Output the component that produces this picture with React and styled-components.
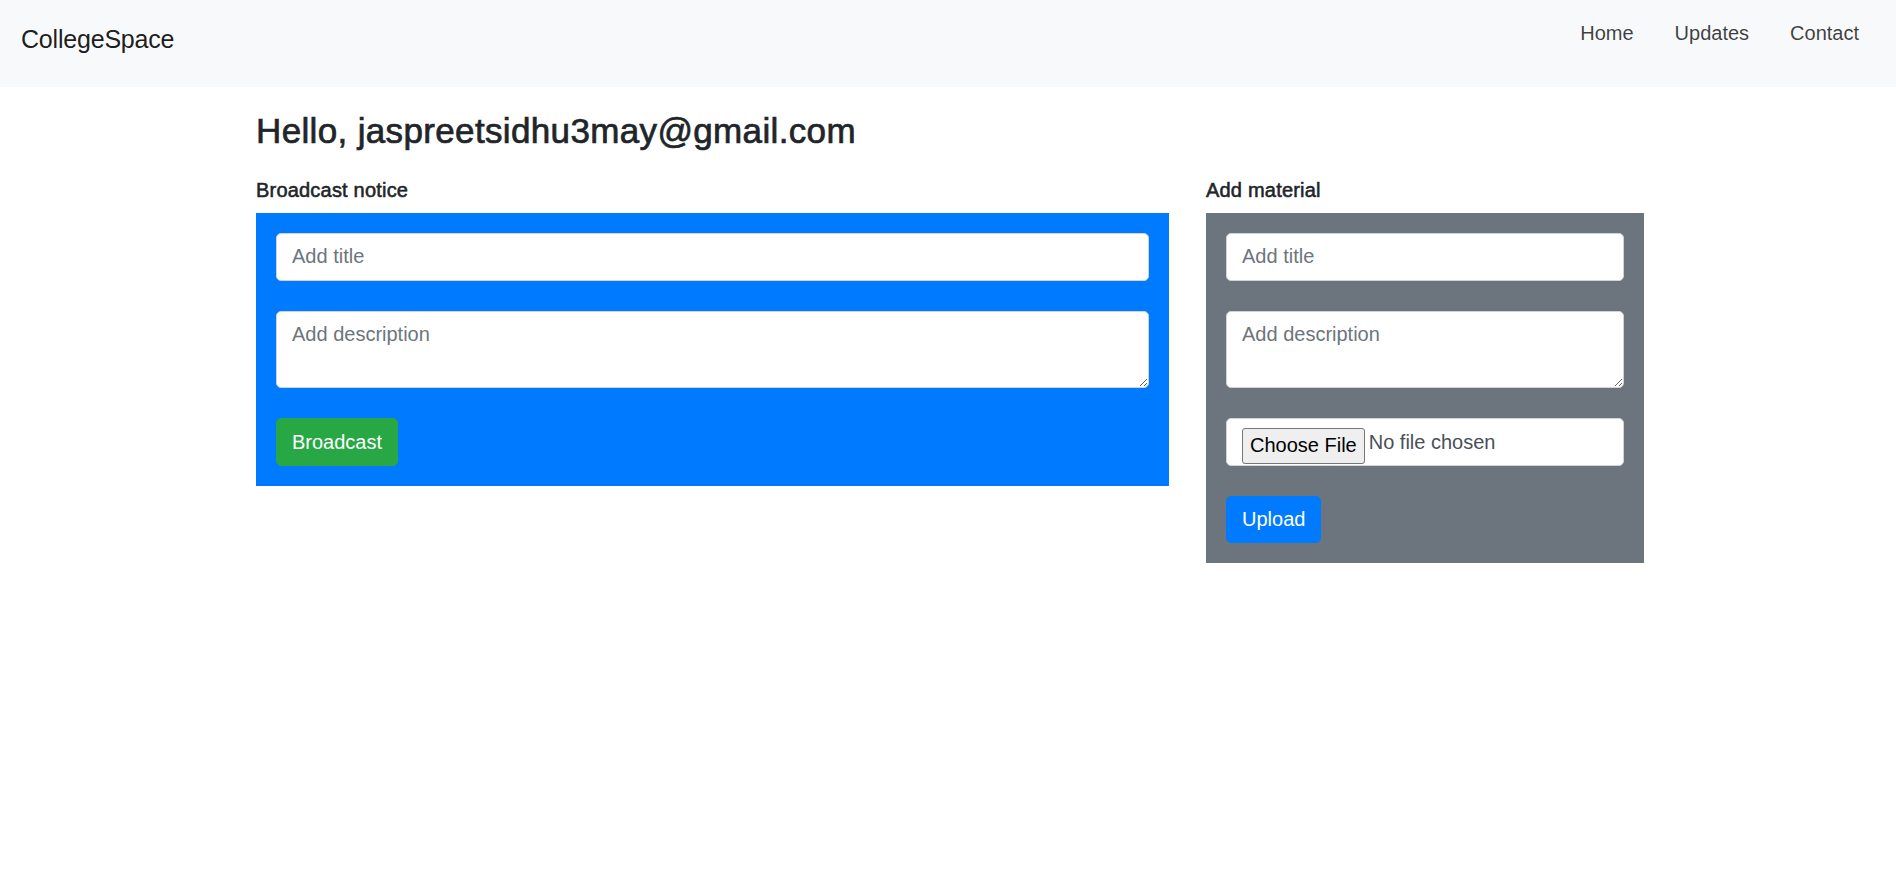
import React from "react";
import styled, { createGlobalStyle } from "styled-components";

/* ---------------------------------- STYLE --------------------------------- */

const colors = {
    texte: "#212529",
    bleu: "#007bff",
    gris: "#6c757d",
    vert: "#28a745",
    bordure: "#ced4da",
    navbar: "#f8f9fa",
};

const GlobalStyle = createGlobalStyle`
    body {
        margin: 0;
        font-family: "Liberation Sans", Arial, sans-serif;
        color: ${colors.texte};
        background: #fff;
    }
    * {
        box-sizing: border-box;
    }
`;

const Navbar = styled.nav`
    display: flex;
    justify-content: space-between;
    align-items: flex-start;
    height: 87px;
    padding: 15px 37px 0 21px;
    background-color: ${colors.navbar};
`;

const Brand = styled.a`
    font-size: 25px;
    line-height: 37.5px;
    padding: 6px 0;
    color: rgba(0, 0, 0, 0.9);
    text-decoration: none;
    letter-spacing: -0.2px;
`;

const NavLinks = styled.ul`
    display: flex;
    gap: 41px;
    list-style: none;
    margin: 0;
    padding: 3px 0 0;
`;

const NavLink = styled.a`
    display: block;
    font-size: 20px;
    line-height: 30px;
    color: rgba(0, 0, 0, 0.75);
    text-decoration: none;
`;

const Container = styled.main`
    width: 1387.5px;
    margin: 0 0 0 calc(50% - 692px);
`;

const Titre = styled.h3`
    font-size: 35px;
    font-weight: 400;
    line-height: 42px;
    letter-spacing: 0.35px;
    margin: 23px 0 23px;
    -webkit-text-stroke: 0.7px ${colors.texte};
`;

const Ligne = styled.div`
    display: grid;
    grid-template-columns: 912.5px 437.5px;
    column-gap: 37.5px;
    align-items: start;
`;

const Label = styled.h6`
    font-size: 20px;
    font-weight: 400;
    line-height: 30px;
    letter-spacing: 0.2px;
    margin: 0 0 8px;
    -webkit-text-stroke: 0.55px ${colors.texte};
`;

const Panneau = styled.form`
    display: flex;
    flex-direction: column;
    align-items: flex-start;
    gap: 30px;
    padding: 20px;
    background-color: ${props => props.fond};
`;

const champ = `
    display: block;
    width: 100%;
    font-family: inherit;
    font-size: 20px;
    line-height: 30px;
    color: #495057;
    background-color: #fff;
    border: 1px solid ${colors.bordure};
    border-radius: 5px;
    padding: 7.5px 15px;
    margin: 0;
    &::placeholder {
        color: ${colors.gris};
        opacity: 1;
    }
    &:focus {
        outline: none;
    }
`;

const Input = styled.input`
    ${champ}
    height: 47.5px;
`;

const Textarea = styled.textarea`
    ${champ}
    height: 77.5px;
    resize: vertical;
`;

const InputFichier = styled.input`
    ${champ}
    height: 47.5px;
    line-height: 30px;
    overflow: visible;
    &::file-selector-button {
        font-family: inherit;
        font-size: 20px;
        height: 36px;
        padding: 0 7px;
        margin: 1px 4px 0 0;
        color: #000;
        background-color: #efefef;
        border: 1px solid #767676;
        border-radius: 3px;
        vertical-align: top;
    }
`;

const Bouton = styled.button`
    font-family: inherit;
    font-size: 20px;
    line-height: 30px;
    height: 47.5px;
    padding: 7.5px 15px;
    color: #fff;
    background-color: ${props => props.fond};
    border: 1px solid ${props => props.fond};
    border-radius: 5px;
    cursor: pointer;
`;

/* ----------------------------------- DOM ---------------------------------- */

function App() {
    return (
        <>
            <GlobalStyle />
            <Navbar>
                <Brand href="#">CollegeSpace</Brand>
                <NavLinks>
                    <li><NavLink href="#">Home</NavLink></li>
                    <li><NavLink href="#">Updates</NavLink></li>
                    <li><NavLink href="#">Contact</NavLink></li>
                </NavLinks>
            </Navbar>
            <Container>
                <Titre>Hello, jaspreetsidhu3may@gmail.com</Titre>
                <Ligne>
                    <div>
                        <Label>Broadcast notice</Label>
                        <Panneau fond={colors.bleu} onSubmit={(e) => e.preventDefault()}>
                            <Input type="text" placeholder="Add title" />
                            <Textarea rows={2} placeholder="Add description" />
                            <Bouton type="submit" fond={colors.vert}>Broadcast</Bouton>
                        </Panneau>
                    </div>
                    <div>
                        <Label>Add material</Label>
                        <Panneau fond={colors.gris} onSubmit={(e) => e.preventDefault()}>
                            <Input type="text" placeholder="Add title" />
                            <Textarea rows={2} placeholder="Add description" />
                            <InputFichier type="file" />
                            <Bouton type="submit" fond={colors.bleu}>Upload</Bouton>
                        </Panneau>
                    </div>
                </Ligne>
            </Container>
        </>
    );
}

export default App;
